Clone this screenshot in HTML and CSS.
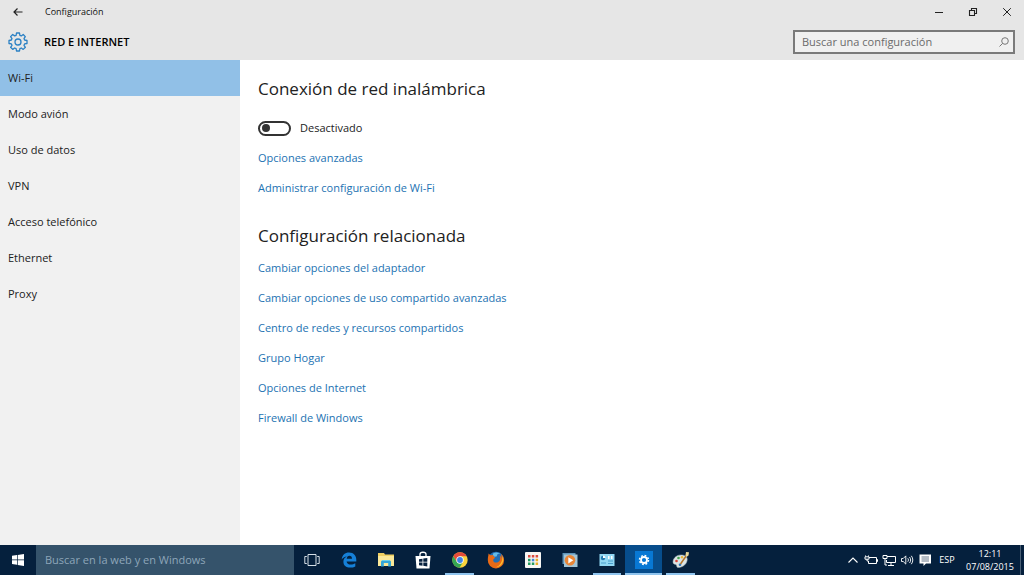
FILE: index.html
```html
<!DOCTYPE html>
<html lang="es">
<head>
<meta charset="utf-8">
<meta name="viewport" content="width=device-width, initial-scale=1">
<title>Configuración</title>
<link rel="stylesheet" href="styles.css">
</head>
<body>
<div class="screen">
  <header class="header">
    <div class="titlebar">
      <button class="win-btn back" type="button" aria-label="Atrás">
        <svg width="12" height="12" viewBox="0 0 12 12" fill="none" stroke="#222" stroke-width="1.2"><path d="M10.500 6H2M5.500 2.500L2 6l3.500 3.500"/></svg>
      </button>
      <span class="window-title">Configuración</span>
      <div class="window-controls">
        <button class="win-btn" type="button" aria-label="Minimizar">
          <svg width="10" height="10" viewBox="0 0 10 10" stroke="#222" stroke-width="1"><path d="M1 5.500h8"/></svg>
        </button>
        <button class="win-btn" type="button" aria-label="Restaurar">
          <svg width="10" height="10" viewBox="0 0 10 10" fill="none" stroke="#222" stroke-width="1.1"><path d="M1.500 3.500h5v5h-5zM3.500 3.500v-2h5v5h-2"/></svg>
        </button>
        <button class="win-btn" type="button" aria-label="Cerrar">
          <svg width="10" height="10" viewBox="0 0 10 10" stroke="#222" stroke-width="1"><path d="M1.200 1.200l7.600 7.600M8.800 1.200L1.200 8.800"/></svg>
        </button>
      </div>
    </div>
    <div class="section-bar">
      <svg class="gear" width="20" height="20" viewBox="0 0 20 20" fill="none" stroke="#2a80c4" stroke-width="1.3" stroke-linejoin="round"><path d="M8.500 1h3l.4 2.300 1.400.6 1.900-1.400 2.100 2.100-1.300 2 .6 1.400 2.400.5v3l-2.400.4-.6 1.400 1.400 2-2.200 2.100-1.900-1.400-1.400.6-.4 2.400h-3l-.4-2.400-1.400-.6-2 1.400-2.100-2.100 1.400-2-.6-1.400L1 11.500v-3L3.400 8 4 6.600l-1.400-2 2.100-2.100 2 1.400 1.400-.6z"/><circle cx="10" cy="10" r="3"/></svg>
      <h1 class="section-title">RED E INTERNET</h1>
      <label class="search">
        <input class="search-input" type="search" placeholder="Buscar una configuración" aria-label="Buscar una configuración">
        <svg width="10" height="10" viewBox="0 0 10 10" fill="none" stroke="#777" stroke-width="1"><circle cx="6" cy="4" r="3.300"/><path d="M3.600 6.400L.5 9.500"/></svg>
      </label>
    </div>
  </header>

  <div class="body">
    <nav class="sidebar" aria-label="Red e Internet">
      <a class="nav-item nav-item-active" href="#" aria-current="page">Wi-Fi</a>
      <a class="nav-item" href="#">Modo avión</a>
      <a class="nav-item" href="#">Uso de datos</a>
      <a class="nav-item" href="#">VPN</a>
      <a class="nav-item" href="#">Acceso telefónico</a>
      <a class="nav-item" href="#">Ethernet</a>
      <a class="nav-item" href="#">Proxy</a>
    </nav>
    <main class="content">
      <section class="group">
        <h2 class="heading">Conexión de red inalámbrica</h2>
        <label class="toggle">
          <input class="toggle-input" type="checkbox" role="switch">
          <span>Desactivado</span>
        </label>
        <a class="link" href="#">Opciones avanzadas</a>
        <a class="link" href="#">Administrar configuración de Wi-Fi</a>
      </section>
      <section class="group">
        <h2 class="heading">Configuración relacionada</h2>
        <a class="link" href="#">Cambiar opciones del adaptador</a>
        <a class="link" href="#">Cambiar opciones de uso compartido avanzadas</a>
        <a class="link" href="#">Centro de redes y recursos compartidos</a>
        <a class="link" href="#">Grupo Hogar</a>
        <a class="link" href="#">Opciones de Internet</a>
        <a class="link" href="#">Firewall de Windows</a>
      </section>
    </main>
  </div>

  <footer class="taskbar">
    <button class="task start" type="button" aria-label="Inicio">
      <svg width="14" height="14" viewBox="0 0 14 14" fill="#fff"><path d="M1 2.800l5-.7v4.500H1zM6.700 2L13 1v5.600H6.700zM1 7.300h5v4.500l-5-.7zM6.700 7.300H13V13l-6.300-1z"/></svg>
    </button>
    <input class="task-search" type="text" placeholder="Buscar en la web y en Windows" aria-label="Buscar en la web y en Windows">
    <div class="apps">
      <button class="task" type="button" aria-label="Vista de tareas">
        <svg width="16" height="14" viewBox="0 0 16 14" fill="none" stroke="#d5dee6"><path d="M4 1.500h8v11H4zM2.800 3.500H.8v7h2M13.200 3.500h2v7h-2"/></svg>
      </button>
      <button class="task" type="button" aria-label="Microsoft Edge">
        <svg width="16" height="16" viewBox="0 0 16 16" fill="#1680d8"><path d="M.7 7.400C1.200 3 4 .6 8 .6c4.800 0 7.300 3.300 7.300 7.300v1.500H5.600c.2 2 1.800 3.100 4.200 3.100 1.700 0 3.100-.5 4.500-1.300v3.200c-1.400.8-3.200 1.200-5 1.200-4.300 0-6.900-2.400-6.900-5.900 0-2.400 1.200-4.300 3.400-5.300C3.600 4.700 1.900 5.700.7 7.400zM5.700 6.700H11c0-1.800-.9-2.900-2.500-2.900S5.900 5 5.700 6.700z"/></svg>
      </button>
      <button class="task" type="button" aria-label="Explorador de archivos">
        <svg width="18" height="16" viewBox="0 0 18 16"><path d="M1 1h6l1 1.500h9V14H1z" fill="#efcf62"/><path d="M1 4h16v10H1z" fill="#fbe899"/><path d="M4 14.500V9.500L5.500 8h7L14 9.500v5h-2.800V11H6.800v3.500z" fill="#35a7d8"/><path d="M5.500 8h7l1 1h-9z" fill="#6fd0e8"/></svg>
      </button>
      <button class="task" type="button" aria-label="Tienda">
        <svg width="18" height="18" viewBox="0 0 18 18"><path d="M6 6V3.200C6 .6 12 .6 12 3.200V6" fill="none" stroke="#fff" stroke-width="1.300"/><path d="M1.500 5h15l-1 12.500h-13z" fill="#fff"/><path d="M5 8.200l3.500-.5v3H5zM9.300 7.600l4-.6v3.700h-4zM5 11.500h3.500v3.200L5 14.200zM9.300 11.500h4v3.900l-4-.6z" fill="#06213f"/></svg>
      </button>
      <button class="task task-running" type="button" aria-label="Google Chrome">
        <svg width="16" height="16" viewBox="0 0 16 16"><circle cx="8" cy="8" r="7.700" fill="#f9d33c"/><path d="M1.300 4.200A7.700 7.700 0 0 1 14.700 4.300H8L4.800 9.800z" fill="#e44b3b"/><path d="M1.300 4.200L4.800 9.800 8 11.500 11 10l-3.500 5.700A7.700 7.700 0 0 1 1.300 4.200z" fill="#35a853"/><circle cx="8" cy="8" r="3.700" fill="#fff"/><circle cx="8" cy="8" r="2.900" fill="#3f83e8"/></svg>
      </button>
      <button class="task" type="button" aria-label="Firefox">
        <svg width="18" height="18" viewBox="0 0 18 18"><circle cx="9" cy="8.500" r="7.800" fill="#216eb4"/><path d="M6 2.500c3-2 6-1 7.500.5-2-.4-3.500 0-3.500 1.500S7 6 6 5z" fill="#64bce8"/><path d="M1.500 2.500l2 1.800 3-.3c-.5 1 .2 2 1.700 2.300-.3 1.200-2 1.500-2 3 0 2 2.500 3 5 1.800 2.200-1 2.300-4 1.500-6.500 1.200.8 2 2 2.200 3L14 3c2 1.500 3.200 4 3.100 6.500A8.100 8.100 0 0 1 9 17.400 8.100 8.100 0 0 1 .8 9C.8 6 1.500 5 1.500 2.500z" fill="#e96a16"/><path d="M15.500 5c2.500 6-1.500 11-6.500 11.300 4-1.800 6.500-5 6.500-11.300z" fill="#fbc02f"/></svg>
      </button>
      <button class="task" type="button" aria-label="Aplicaciones">
        <svg width="18" height="18" viewBox="0 0 18 18"><rect x="1" y="1" width="16" height="16" rx="1" fill="#f7f7f4"/><path d="M4 4h2.500v2.500H4zM7.800 4h2.500v2.500H7.800zM11.600 4h2.500v2.500h-2.500z" fill="#dc4c40"/><path d="M4 7.800h2.500v2.500H4z" fill="#1d9b61"/><path d="M7.800 7.800h2.500v2.500H7.800z" fill="#4285d8"/><path d="M11.600 7.800h2.500v2.500h-2.500zM11.600 11.600h2.500v2.500h-2.500z" fill="#edae27"/><path d="M4 11.600h2.500v2.500H4zM7.800 11.600h2.500v2.500H7.800z" fill="#229b61"/></svg>
      </button>
      <button class="task" type="button" aria-label="Reproductor multimedia">
        <svg width="16" height="16" viewBox="0 0 16 16"><path d="M.5 1h13v11H.5z" fill="#5f95ba"/><path d="M2 2.500h13.500V15H2z" fill="#a2c4d6"/><circle cx="8" cy="8.300" r="5.300" fill="#e98637"/><path d="M6.300 5.200l5 3.100-5 3.100z" fill="#fff"/></svg>
      </button>
      <button class="task task-running" type="button" aria-label="Panel de control">
        <svg width="16" height="14" viewBox="0 0 16 14"><rect x=".5" y="1" width="15" height="12" fill="#91d7f3"/><circle cx="4" cy="5" r="2.200" fill="#257bb0"/><path d="M4 5V2.500A2.500 2.500 0 0 1 6.500 5z" fill="#fff"/><path d="M2 10h5M9 8h5M9 10.500h5" stroke="#4a9fcc"/><path d="M9 3h1.500v3H9zM12 3h1.500v3H12z" fill="#fff"/></svg>
      </button>
      <button class="task task-running task-current" type="button" aria-label="Configuración">
        <svg width="18" height="18" viewBox="0 0 18 18"><path d="M0 0h18v18H0z" fill="#0878d4"/><circle cx="9" cy="9" r="3" fill="none" stroke="#fff" stroke-width="1.800"/><circle cx="9" cy="9" r="4.500" fill="none" stroke="#fff" stroke-width="1.500" stroke-dasharray="1.800 1.734"/></svg>
      </button>
      <button class="task task-running" type="button" aria-label="Paint">
        <svg width="18" height="18" viewBox="0 0 18 18"><path d="M1 11c0-4 4-7.500 9-7 4 .4 6 3 5 6-1 4-5 6.500-9 6.500-1.700 0-1-2-1.800-2.700C3.200 13 1 13.500 1 11z" fill="#dce4e5" stroke="#a5b2b8" stroke-width=".5"/><circle cx="4.500" cy="10" r="1.300" fill="#d8453a"/><circle cx="6.500" cy="7" r="1.300" fill="#46a34f"/><circle cx="10" cy="6.300" r="1.200" fill="#e8b634"/><circle cx="8" cy="13.800" r="1.300" fill="#3079bd"/><path d="M8.500 13L15.500 3" stroke="#b5762b" stroke-width="1.500"/><path d="M13.500 4.500L14 1l3 .3-.5 3.200-2 1.500z" fill="#ead89b"/></svg>
      </button>
    </div>
    <div class="tray">
      <button class="tray-btn" type="button" aria-label="Mostrar iconos ocultos">
        <svg width="14" height="14" viewBox="0 0 14 14" fill="none" stroke="#fff" stroke-width="1.100"><path d="M2.500 9.500L7 5l4.500 4.500"/></svg>
      </button>
      <button class="tray-btn" type="button" aria-label="Batería">
        <svg width="14" height="14" viewBox="0 0 14 14" fill="none" stroke="#fff"><path d="M5 4.500h7.500v6h-8V8M12.500 6.500h1v2h-1M1 3h1M4 3h1"/><path d="M1 3.800h4v2.400H1zM3 6v2h1.500"/></svg>
      </button>
      <button class="tray-btn" type="button" aria-label="Red">
        <svg width="14" height="14" viewBox="0 0 14 14" fill="none" stroke="#fff"><path d="M5 3.500h8.500v6H4.500V7M9 9.500v3M6 12.500h6M1 2.500h4v3H1zM3 5.500v6.500h2"/></svg>
      </button>
      <button class="tray-btn" type="button" aria-label="Volumen">
        <svg width="14" height="14" viewBox="0 0 14 14" fill="none" stroke="#fff" stroke-width=".9"><path d="M1.500 5.500h1.700l2.600-2.600v8.200L3.200 8.500H1.500zM7.800 5.300c.8 1 .8 2.400 0 3.400M9.500 4c1.500 1.800 1.500 4.200 0 6M11.300 2.800c2 2.500 2 5.900 0 8.400"/></svg>
      </button>
      <button class="tray-btn" type="button" aria-label="Notificaciones">
        <svg width="14" height="14" viewBox="0 0 14 14"><path d="M1.500 1.500h11.500v9H8L5.500 13v-2.500h-4z" fill="#fff"/><path d="M3.500 4h7.500M3.500 6h7.500M3.500 8h7.500" stroke="#06213f" stroke-width=".6"/></svg>
      </button>
      <button class="language" type="button">ESP</button>
      <button class="clock" type="button"><time>12:11</time><span>07/08/2015</span></button>
      <button class="show-desktop" type="button" aria-label="Mostrar escritorio"></button>
    </div>
  </footer>
</div>
</body>
</html>
```

FILE: styles.css
```css
* { box-sizing: border-box; }

body {
  margin: 0;
  font-family: "Open Sans", "Noto Sans", sans-serif;
  font-size: 11px;
  line-height: 18px;
  color: #222;
  background: #fff;
}

button {
  display: flex;
  align-items: center;
  justify-content: center;
  padding: 0;
  border: 0;
  background: none;
  font: inherit;
  color: inherit;
}

a { text-decoration: none; }

svg { display: block; flex: none; }

.screen {
  display: flex;
  flex-direction: column;
  min-height: 100vh;
}

/* Window header */
.header { background: #e6e6e6; }

.titlebar {
  display: flex;
  align-items: center;
  height: 24px;
}

.win-btn { width: 34px; height: 24px; }

.back { width: 36px; }

.window-title {
  margin-left: 9px;
  font-size: 9px;
  color: #111;
}

.window-controls {
  display: flex;
  margin-left: auto;
}

.section-bar {
  display: flex;
  align-items: center;
  height: 36px;
  padding: 0 9px 0 8px;
}

.section-title {
  margin: 0 0 0 16px;
  font-size: 11px;
  font-weight: 600;
  color: #000;
}

.search {
  display: flex;
  align-items: center;
  width: 222px;
  height: 24px;
  margin-left: auto;
  padding: 0 4px 0 7px;
  border: 2px solid #7a7a7a;
  background: #f0f0f0;
}

.search-input {
  flex: 1;
  min-width: 0;
  padding: 0;
  border: 0;
  outline: 0;
  background: none;
  font: inherit;
  color: #222;
}

.search-input::placeholder { color: #6b6b6b; opacity: 1; }

/* Page body */
.body {
  display: flex;
  flex: 1;
}

.sidebar {
  flex: none;
  width: 240px;
  background: #f1f1f1;
}

.nav-item {
  display: block;
  padding: 9px 8px;
  color: #222;
}

.nav-item-active { background: #91c0e7; }

.content {
  flex: 1;
  padding: 16px 18px;
}

.group { margin-bottom: 20px; }

.heading {
  margin: 0 0 4px;
  font-size: 17px;
  font-weight: 400;
  line-height: 26px;
}

.toggle {
  display: flex;
  align-items: center;
  gap: 9px;
  width: max-content;
  margin: 17px 0 6px;
}

.toggle-input {
  appearance: none;
  display: flex;
  align-items: center;
  width: 33px;
  height: 15px;
  margin: 0;
  padding: 0 2px;
  border: 2px solid #333;
  border-radius: 8px;
}

.toggle-input::before {
  content: "";
  width: 8px;
  height: 8px;
  border-radius: 50%;
  background: #333;
}

.toggle-input:checked { justify-content: flex-end; }

.link {
  display: block;
  width: max-content;
  padding: 6px 0;
  color: #1c72b2;
}

/* Taskbar */
.taskbar {
  display: flex;
  height: 30px;
  background: #05203d;
  color: #fff;
}

.start { width: 36px; }

.task-search {
  width: 258px;
  padding: 0 9px;
  border: 0;
  background: #35536b;
  font: inherit;
  color: #fff;
}

.task-search::placeholder { color: #8ea6b9; opacity: 1; }

.apps {
  display: grid;
  grid-template-columns: repeat(11, 1fr);
  width: 405px;
}

.task-running {
  margin: 0 4px;
  border-bottom: 2px solid #8fc4ee;
  padding-top: 2px;
}

.task-current {
  margin: 0;
  background: #074d8c;
}

.tray {
  display: flex;
  align-items: stretch;
  margin-left: auto;
}

.tray-btn { width: 18px; }

.language {
  width: 26px;
  font-size: 9px;
}

.clock {
  flex-direction: column;
  width: 60px;
  font-size: 9px;
  line-height: 13px;
}

.show-desktop {
  width: 4px;
  border-left: 1px solid #4a6076;
}
```
